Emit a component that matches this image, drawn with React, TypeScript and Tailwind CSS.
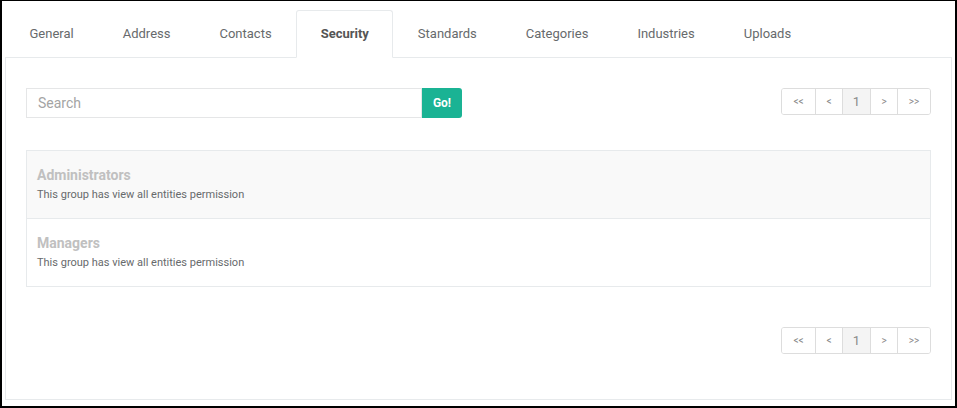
import React from 'react';

const tabs = ['General', 'Address', 'Contacts', 'Security', 'Standards', 'Categories', 'Industries', 'Uploads'];

const groups = [
  { name: 'Administrators', note: 'This group has view all entities permission' },
  { name: 'Managers', note: 'This group has view all entities permission' },
];

const Pager = () => {
  const items = [
    { label: '<<', w: 'w-[33px]', text: 'text-[10px]' },
    { label: '<', w: 'w-[27px]', text: 'text-[10px]' },
    { label: '1', w: 'w-[28px]', text: 'text-[13px]', active: true },
    { label: '>', w: 'w-[27px]', text: 'text-[10px]' },
    { label: '>>', w: 'w-[33px]', text: 'text-[10px]' },
  ];
  return (
    <div className="flex h-[27px] rounded-[3px] border border-[#dddddd] overflow-hidden">
      {items.map((it, i) => (
        <div
          key={i}
          className={`${it.w} ${it.text} flex items-center justify-center text-[#8a8a8a] ${
            i > 0 ? 'border-l border-[#dddddd]' : ''
          } ${it.active ? 'bg-[#f4f4f4]' : 'bg-white'}`}
        >
          {it.label}
        </div>
      ))}
    </div>
  );
};

const App = () => {
  return (
    <div
      className="w-[957px] h-[408px] bg-white border-black border-t border-l-2 border-r-2 border-b-2 flex flex-col pt-[9px] pl-[3px] pr-[3px] pb-[6px]"
      style={{ fontFamily: 'Roboto, "Liberation Sans", sans-serif' }}
    >
      <div className="flex h-[48px] -mb-px relative z-10">
        {tabs.map((t) => {
          const active = t === 'Security';
          return (
            <div
              key={t}
              className={`h-full flex items-center px-[23.5px] text-[13px] border rounded-t-[3px] ${
                active
                  ? 'border-[#e7eaec] border-b-white bg-white text-[#555555] font-bold'
                  : 'border-transparent text-[#676a6c]'
              }`}
            >
              {t}
            </div>
          );
        })}
      </div>
      <div className="flex-1 border border-[#e7eaec] px-[20px] pt-[30px] flex flex-col">
        <div className="flex justify-between items-start">
          <div className="flex w-[436px] h-[30px]">
            <div className="flex-1 border border-[#e5e6e7] flex items-center px-[11px] text-[14px] text-[#a4a4a4]">
              Search
            </div>
            <div className="w-[40px] bg-[#1ab394] rounded-r-[3px] flex items-center justify-center text-white text-[12px] font-bold">
              Go!
            </div>
          </div>
          <Pager />
        </div>
        <div className="mt-[32px] border border-[#e7eaec]">
          {groups.map((g, i) => (
            <div
              key={g.name}
              className={`flex flex-col justify-center px-[10px] ${
                i === 0 ? 'h-[68px] bg-[#f9f9f9] border-b border-[#e7eaec]' : 'h-[67px] bg-white'
              }`}
            >
              <div className="text-[14px] font-bold text-[#c0c0c0] leading-[17px]">{g.name}</div>
              <div className="text-[11px] text-[#676a6c] leading-[14px] mt-[4px]">{g.note}</div>
            </div>
          ))}
        </div>
        <div className="mt-[40px] flex justify-end">
          <Pager />
        </div>
      </div>
    </div>
  );
};

export default App;
